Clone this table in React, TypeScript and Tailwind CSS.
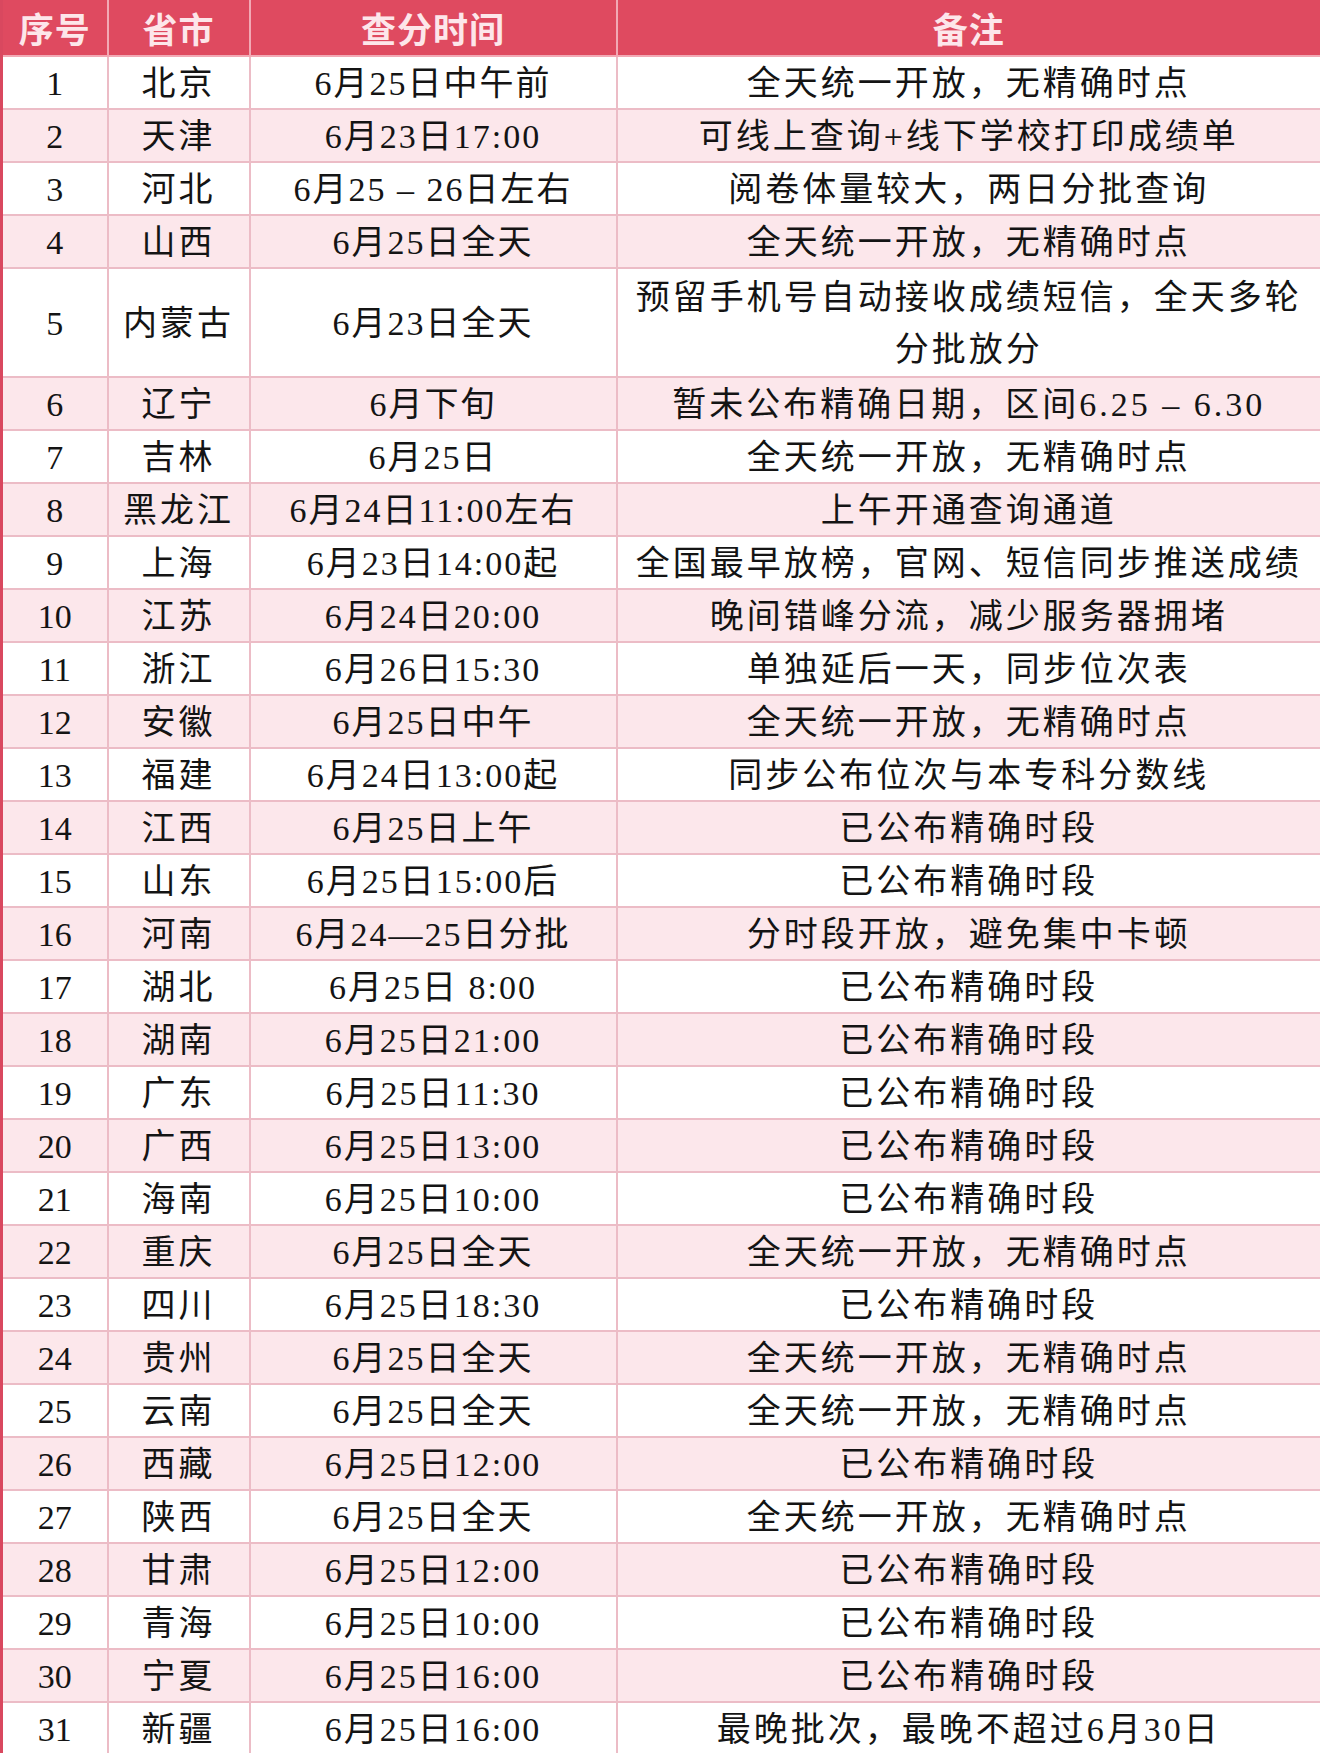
type Row = {
  no: number;
  province: string;
  time: string;
  note: string;
};

const rows: Row[] = [
  { no: 1, province: '北京', time: '6月25日中午前', note: '全天统一开放，无精确时点' },
  { no: 2, province: '天津', time: '6月23日17:00', note: '可线上查询+线下学校打印成绩单' },
  { no: 3, province: '河北', time: '6月25 – 26日左右', note: '阅卷体量较大，两日分批查询' },
  { no: 4, province: '山西', time: '6月25日全天', note: '全天统一开放，无精确时点' },
  { no: 5, province: '内蒙古', time: '6月23日全天', note: '预留手机号自动接收成绩短信，全天多轮分批放分' },
  { no: 6, province: '辽宁', time: '6月下旬', note: '暂未公布精确日期，区间6.25 – 6.30' },
  { no: 7, province: '吉林', time: '6月25日', note: '全天统一开放，无精确时点' },
  { no: 8, province: '黑龙江', time: '6月24日11:00左右', note: '上午开通查询通道' },
  { no: 9, province: '上海', time: '6月23日14:00起', note: '全国最早放榜，官网、短信同步推送成绩' },
  { no: 10, province: '江苏', time: '6月24日20:00', note: '晚间错峰分流，减少服务器拥堵' },
  { no: 11, province: '浙江', time: '6月26日15:30', note: '单独延后一天，同步位次表' },
  { no: 12, province: '安徽', time: '6月25日中午', note: '全天统一开放，无精确时点' },
  { no: 13, province: '福建', time: '6月24日13:00起', note: '同步公布位次与本专科分数线' },
  { no: 14, province: '江西', time: '6月25日上午', note: '已公布精确时段' },
  { no: 15, province: '山东', time: '6月25日15:00后', note: '已公布精确时段' },
  { no: 16, province: '河南', time: '6月24—25日分批', note: '分时段开放，避免集中卡顿' },
  { no: 17, province: '湖北', time: '6月25日 8:00', note: '已公布精确时段' },
  { no: 18, province: '湖南', time: '6月25日21:00', note: '已公布精确时段' },
  { no: 19, province: '广东', time: '6月25日11:30', note: '已公布精确时段' },
  { no: 20, province: '广西', time: '6月25日13:00', note: '已公布精确时段' },
  { no: 21, province: '海南', time: '6月25日10:00', note: '已公布精确时段' },
  { no: 22, province: '重庆', time: '6月25日全天', note: '全天统一开放，无精确时点' },
  { no: 23, province: '四川', time: '6月25日18:30', note: '已公布精确时段' },
  { no: 24, province: '贵州', time: '6月25日全天', note: '全天统一开放，无精确时点' },
  { no: 25, province: '云南', time: '6月25日全天', note: '全天统一开放，无精确时点' },
  { no: 26, province: '西藏', time: '6月25日12:00', note: '已公布精确时段' },
  { no: 27, province: '陕西', time: '6月25日全天', note: '全天统一开放，无精确时点' },
  { no: 28, province: '甘肃', time: '6月25日12:00', note: '已公布精确时段' },
  { no: 29, province: '青海', time: '6月25日10:00', note: '已公布精确时段' },
  { no: 30, province: '宁夏', time: '6月25日16:00', note: '已公布精确时段' },
  { no: 31, province: '新疆', time: '6月25日16:00', note: '最晚批次，最晚不超过6月30日' },
];

const cell = 'border-2 border-[#ecbcc6] text-center align-middle p-0 pt-[3px]';

export default function App() {
  return (
    <div className="w-[1320px] h-[1753px] bg-white overflow-hidden">
      <table
        className="w-[1320px] table-fixed border-collapse border-l-[3px] border-r-[3px] border-b-[3px] border-[#d9485f] text-[34px] leading-[38px] text-[#141414] tracking-[3px]"
        style={{ fontFamily: '"Liberation Serif", "Noto Sans CJK SC", serif' }}
      >
        <colgroup>
          <col className="w-[106px]" />
          <col className="w-[142px]" />
          <col className="w-[367px]" />
          <col className="w-[705px]" />
        </colgroup>
        <thead>
          <tr className="h-[56px] bg-[#df4a60] text-[#fde6ea] text-[35px] tracking-[1px]">
            {['序号', '省市', '查分时间', '备注'].map((h) => (
              <th
                key={h}
                className="border-2 border-[#f2a9b5] border-t-0 font-semibold p-0 align-middle"
                style={{ fontFamily: '"Noto Sans CJK SC", sans-serif' }}
              >
                {h}
              </th>
            ))}
          </tr>
        </thead>
        <tbody>
          {rows.map((r) => (
            <tr
              key={r.no}
              className={`${r.no === 5 ? 'h-[106px]' : 'h-[53px]'} ${
                r.no % 2 === 0 ? 'bg-[#fce7eb]' : 'bg-white'
              }`}
            >
              <td className={`${cell} tracking-[0px]`}>{r.no}</td>
              <td className={cell}>{r.province}</td>
              <td className={`${cell} tracking-[2px]`}>{r.time}</td>
              <td className={`${cell} ${r.no === 5 ? 'leading-[52px]' : ''} px-2`}>{r.note}</td>
            </tr>
          ))}
        </tbody>
      </table>
    </div>
  );
}
